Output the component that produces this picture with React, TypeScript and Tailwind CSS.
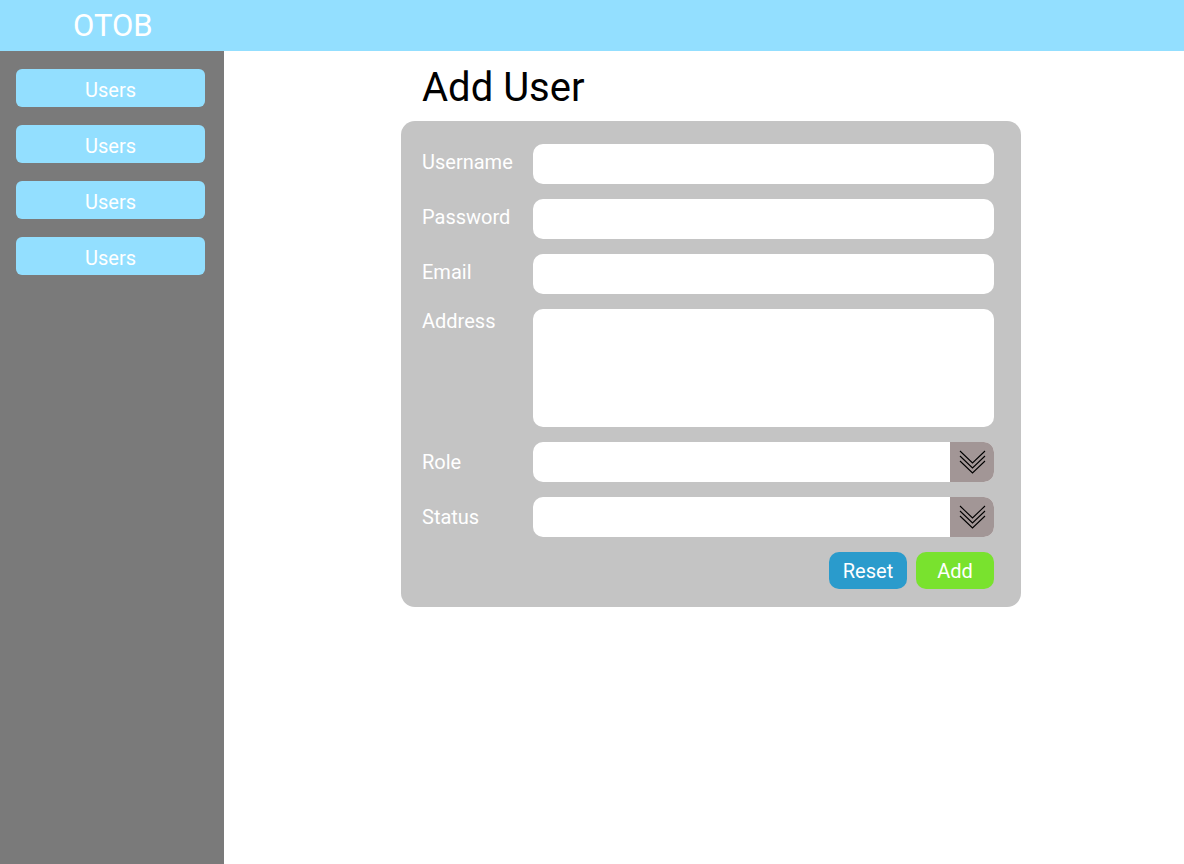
import React from 'react';

const navItems = ['Users', 'Users', 'Users', 'Users'];

const Chevrons = () => (
  <svg width="27" height="25" viewBox="0 0 27 25" fill="none" stroke="#000" strokeWidth="1.1">
    <polyline points="1,1 13.5,13 26,1" />
    <polyline points="1,6 13.5,18 26,6" />
    <polyline points="1,11 13.5,23 26,11" />
  </svg>
);

const Field = ({ label, children, pad = 'pt-[6px]' }: { label: string; children: React.ReactNode; pad?: string }) => (
  <div className="flex">
    <label className={`w-[111px] shrink-0 text-[20px] leading-[24px] text-white ${pad}`}>{label}</label>
    {children}
  </div>
);

const SelectBox = () => (
  <div className="flex h-[40px] flex-1 overflow-hidden rounded-[10px] bg-white">
    <div className="flex-1" />
    <div className="flex w-[44px] items-center justify-center bg-[#a29696]">
      <Chevrons />
    </div>
  </div>
);

export default function App() {
  return (
    <div className="flex h-screen flex-col font-['Roboto',sans-serif]">
      <header className="flex h-[51px] shrink-0 items-center bg-[#93dfff] pl-[73px]">
        <span className="text-[31px] leading-none text-white">OTOB</span>
      </header>
      <div className="flex flex-1">
        <aside className="flex w-[224px] shrink-0 flex-col gap-[18px] bg-[#7a7a7a] pl-[16px] pt-[18px]">
          {navItems.map((item, i) => (
            <button
              key={i}
              className="flex h-[38px] w-[189px] items-center justify-center rounded-[6px] bg-[#93dfff] pt-[3px] text-[20px] text-white"
            >
              {item}
            </button>
          ))}
        </aside>
        <main className="flex-1 pl-[177px] pt-[17px]">
          <div className="w-[620px]">
            <h1 className="pl-[21px] text-[40px] leading-[40px] text-black">Add User</h1>
            <form className="mt-[13px] flex flex-col gap-[15px] rounded-[14px] bg-[#c4c4c4] pb-[18px] pl-[21px] pr-[27px] pt-[23px]">
              <Field label="Username">
                <input className="h-[40px] flex-1 rounded-[10px] bg-white outline-none" />
              </Field>
              <Field label="Password">
                <input type="password" className="h-[40px] flex-1 rounded-[10px] bg-white outline-none" />
              </Field>
              <Field label="Email">
                <input className="h-[40px] flex-1 rounded-[10px] bg-white outline-none" />
              </Field>
              <Field label="Address" pad="pt-0">
                <textarea className="h-[118px] flex-1 resize-none rounded-[10px] bg-white outline-none" />
              </Field>
              <Field label="Role" pad="pt-[8px]">
                <SelectBox />
              </Field>
              <Field label="Status" pad="pt-[8px]">
                <SelectBox />
              </Field>
              <div className="flex justify-end gap-[9px]">
                <button type="button" className="h-[37px] w-[78px] rounded-[10px] bg-[#2a9bcc] text-[20px] text-white">
                  Reset
                </button>
                <button type="button" className="h-[37px] w-[78px] rounded-[10px] bg-[#79e22e] text-[20px] text-white">
                  Add
                </button>
              </div>
            </form>
          </div>
        </main>
      </div>
    </div>
  );
}
